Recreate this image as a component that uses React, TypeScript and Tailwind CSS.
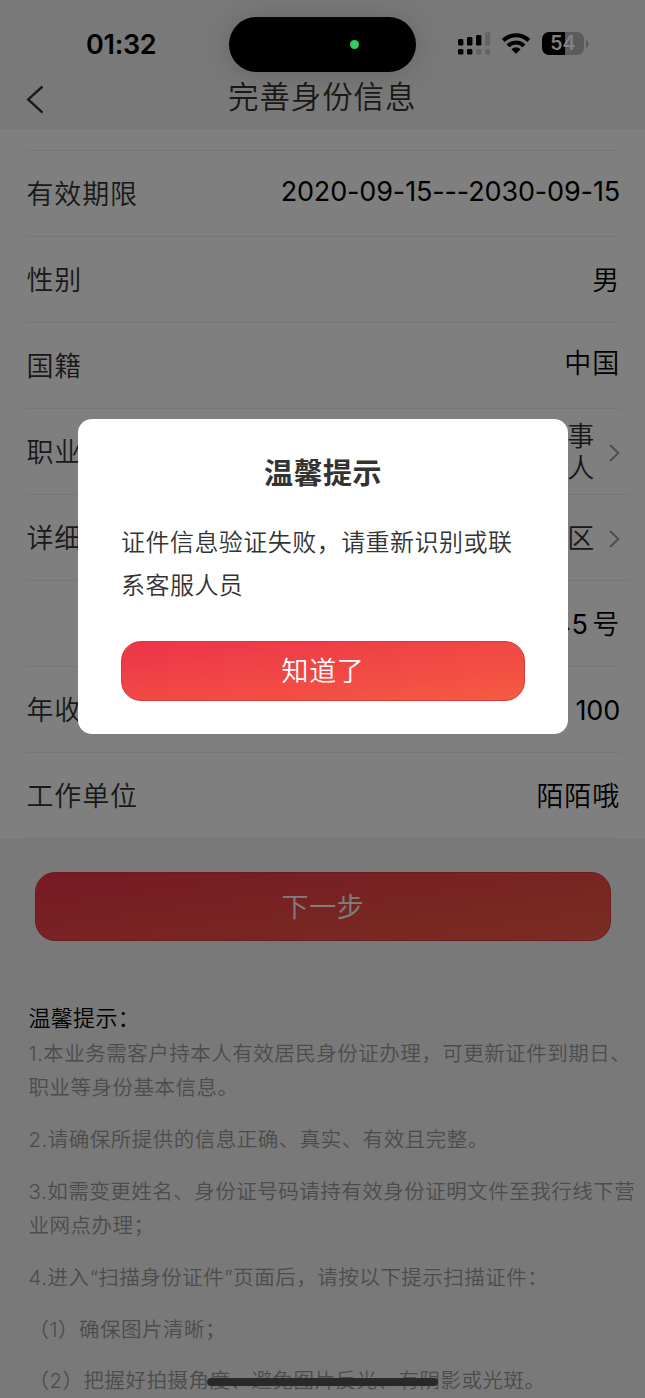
import type { ReactNode } from 'react';

function StatusBar() {
  return (
    <div className="absolute inset-x-0 top-0 z-20 flex h-[88px]">
      <div className="w-[229px] pl-[86px] pt-[29px] text-[27px] font-semibold leading-[32px] tracking-[-0.3px] text-black">
        01:32
      </div>
      <div className="mt-[17px] flex h-[55px] w-[187px] items-center rounded-full bg-black pl-[121px] shadow-[0_2px_28px_rgba(0,0,0,0.16)]">
        <span className="h-[9px] w-[9px] rounded-full bg-[#35cb5b]" />
      </div>
      <svg className="ml-[42px] mt-[32px]" width="33" height="23" viewBox="0 0 33 23">
        <rect x="0" y="7" width="5.4" height="6.6" rx="1.4" fill="#000" />
        <rect x="9" y="5" width="5.4" height="8.6" rx="1.4" fill="#000" />
        <rect x="18" y="3" width="5.4" height="10.6" rx="1.4" fill="#000" />
        <rect x="27" y="0.3" width="5.2" height="13.3" rx="1.4" fill="#646464" />
        <rect x="0" y="17" width="5.4" height="5.6" rx="1.4" fill="#000" />
        <rect x="9" y="17" width="5.4" height="5.6" rx="1.4" fill="#000" />
        <rect x="18" y="17" width="5.4" height="5.6" rx="1.4" fill="#646464" />
        <rect x="27" y="17" width="5.2" height="5.6" rx="1.4" fill="#646464" />
      </svg>
      <svg className="ml-[10px] mt-[32px]" width="30" height="23" viewBox="0 0 30 23">
        <path d="M2.2 8.6 A18 18 0 0 1 27.8 8.6" fill="none" stroke="#000" strokeWidth="4.2" />
        <path d="M7 13.8 A11.3 11.3 0 0 1 23 13.8" fill="none" stroke="#000" strokeWidth="4" />
        <path d="M10.4 17.3 Q15 13.4 19.6 17.3 L15.6 21.2 Q15 21.8 14.4 21.2 Z" fill="#000" />
      </svg>
      <div className="ml-[11px] mt-[32px] flex h-[23px] w-[42px] items-center justify-center rounded-[7px] bg-[linear-gradient(90deg,#000_0_23px,#5b5b5b_23px)] pt-px text-[19.5px] font-semibold leading-none text-[#828282]">
        54
      </div>
      <svg className="ml-[2px] mt-[40px]" width="3" height="8" viewBox="0 0 3 8">
        <path d="M0 0 Q2.6 1.2 2.6 4 Q2.6 6.8 0 8 Z" fill="#5b5b5b" />
      </svg>
    </div>
  );
}

function Chevron() {
  return (
    <svg className="ml-[14px]" width="11" height="18" viewBox="0 0 11 18">
      <path d="M1 1 L9.4 9 L1 17" fill="none" stroke="#999" strokeWidth="1.9" />
    </svg>
  );
}

function Row({ label, wide, children }: { label: string; wide?: boolean; children: ReactNode }) {
  return (
    <div
      className={`${wide ? 'mr-[16px] pr-[9px]' : 'mr-[25px]'} ml-[25px] flex h-[86.05px] items-center justify-between border-b border-[#eeeeee] pl-[1.5px] pt-[4px] text-[27px] tracking-[0.85px]`}
    >
      <span className="text-[#333]">{label}</span>
      {children}
    </div>
  );
}

export default function App() {
  return (
    <div className="relative h-[1398px] w-[645px] overflow-hidden whitespace-nowrap bg-[#f2f2f2] font-['Inter','Noto_Sans_CJK_SC',sans-serif] font-[350] text-black">
      <header className="flex h-[129px] items-start pt-[78px] text-[#333]">
        <svg className="ml-[26px] mt-[7px]" width="18" height="29" viewBox="0 0 18 29">
          <path d="M16.5 1.5 L2.2 14.4 L16.5 27.6" fill="none" stroke="#333" strokeWidth="2.4" />
        </svg>
        <h1 className="ml-[184px] text-[30.5px] font-[350] leading-[38px] tracking-[0.9px]">完善身份信息</h1>
      </header>

      <main className="bg-white">
        <div className="ml-[25px] mr-[25px] h-[21.5px] border-b border-[#eeeeee]" />
        <Row label="有效期限">
          <span className="mb-[6px] font-normal tracking-[-0.14px]">2020-09-15---2030-09-15</span>
        </Row>
        <Row label="性别">
          <span>男</span>
        </Row>
        <Row label="国籍">
          <span className="mb-[5px]">中国</span>
        </Row>
        <Row label="职业" wide>
          <span className="flex items-center text-[#333]">
            <span className="leading-[32px]">
              事<br />人
            </span>
            <Chevron />
          </span>
        </Row>
        <Row label="详细" wide>
          <span className="flex items-center text-[#333]">
            区<Chevron />
          </span>
        </Row>
        <Row label="">
          <span className="[word-spacing:-5px]">
            <span className="font-normal">45</span> 号
          </span>
        </Row>
        <Row label="年收">
          <span className="font-normal tracking-[-0.2px]">100</span>
        </Row>
        <Row label="工作单位">
          <span>陌陌哦</span>
        </Row>
      </main>

      <button className="ml-[35px] mt-[33px] flex h-[69px] w-[576px] items-center justify-center rounded-[20px] border border-[#d83838] bg-[linear-gradient(172deg,#ed3449,#f55b42)] pt-[3px] text-[27px] tracking-[0.6px] text-white">
        下一步
      </button>

      <section className="ml-[28.5px] mt-[59px] text-[20.5px] leading-[34.4px] tracking-[0.5px] text-[#999]">
        <h2 className="text-[22px] font-[350] leading-[36px] tracking-[0.3px] text-black">温馨提示：</h2>
        <p className="mt-px">
          1.本业务需客户持本人有效居民身份证办理，可更新证件到期日、
          <br />
          职业等身份基本信息。
        </p>
        <p className="mt-[17.3px]">2.请确保所提供的信息正确、真实、有效且完整。</p>
        <p className="mt-[17.3px]">
          3.如需变更姓名、身份证号码请持有效身份证明文件至我行线下营
          <br />
          业网点办理；
        </p>
        <p className="mt-[17.3px]">4.进入“扫描身份证件”页面后，请按以下提示扫描证件：</p>
        <p className="mt-[17.3px]">（1）确保图片清晰；</p>
        <p className="mt-[17.3px]">（2）把握好拍摄角度、避免图片反光、有阴影或光斑。</p>
      </section>

      <div className="absolute inset-0 z-10 flex items-start bg-black/50 pl-[78px] pt-[419px]">
        <div className="h-[315px] w-[490px] rounded-[14px] bg-white px-[43px] text-[#333]">
          <h2 className="pt-[35px] text-center text-[29px] font-bold leading-[40px] tracking-[0.5px]">温馨提示</h2>
          <p className="mt-[27px] text-[24px] leading-[43px] tracking-[0.46px]">
            证件信息验证失败，请重新识别或联
            <br />
            系客服人员
          </p>
          <button className="mt-[34px] flex h-[60px] w-[404px] items-center justify-center rounded-[20px] border border-[#d83838] bg-[linear-gradient(172deg,#ed3449,#f55b42)] pt-[3px] text-[27px] tracking-[0.6px] text-white">
            知道了
          </button>
        </div>
      </div>

      <StatusBar />
      <div className="absolute left-[207px] top-[1378px] z-20 h-[8px] w-[231px] rounded-full bg-[#292929]" />
    </div>
  );
}
